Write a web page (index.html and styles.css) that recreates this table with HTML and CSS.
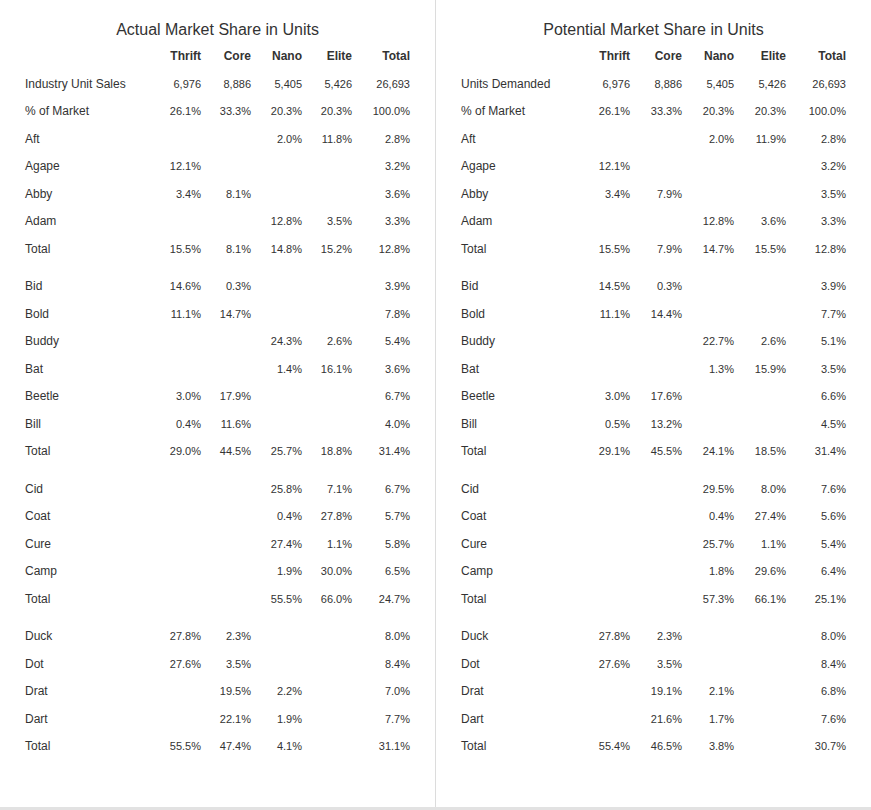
FILE: index.html
```html
<!DOCTYPE html>
<html lang="en">
<head>
<meta charset="utf-8">
<title>Market Share in Units</title>
<link rel="stylesheet" href="styles.css">
</head>
<body>
<div class="page">
  <section class="panel panel-actual">
    <h2 class="title">Actual Market Share in Units</h2>
    <table class="share">
      <colgroup><col class="c-label"><col class="c-num"><col class="c-num"><col class="c-num2"><col class="c-num"><col class="c-total"></colgroup>
      <thead>
        <tr><th class="label"></th><th>Thrift</th><th>Core</th><th>Nano</th><th>Elite</th><th>Total</th></tr>
      </thead>
      <tbody>
        <tr><td class="label">Industry Unit Sales</td><td>6,976</td><td>8,886</td><td>5,405</td><td>5,426</td><td>26,693</td></tr>
        <tr><td class="label">% of Market</td><td>26.1%</td><td>33.3%</td><td>20.3%</td><td>20.3%</td><td>100.0%</td></tr>
        <tr><td class="label">Aft</td><td></td><td></td><td>2.0%</td><td>11.8%</td><td>2.8%</td></tr>
        <tr><td class="label">Agape</td><td>12.1%</td><td></td><td></td><td></td><td>3.2%</td></tr>
        <tr><td class="label">Abby</td><td>3.4%</td><td>8.1%</td><td></td><td></td><td>3.6%</td></tr>
        <tr><td class="label">Adam</td><td></td><td></td><td>12.8%</td><td>3.5%</td><td>3.3%</td></tr>
        <tr><td class="label">Total</td><td>15.5%</td><td>8.1%</td><td>14.8%</td><td>15.2%</td><td>12.8%</td></tr>
        <tr class="sep"><td colspan="6"></td></tr>
        <tr><td class="label">Bid</td><td>14.6%</td><td>0.3%</td><td></td><td></td><td>3.9%</td></tr>
        <tr><td class="label">Bold</td><td>11.1%</td><td>14.7%</td><td></td><td></td><td>7.8%</td></tr>
        <tr><td class="label">Buddy</td><td></td><td></td><td>24.3%</td><td>2.6%</td><td>5.4%</td></tr>
        <tr><td class="label">Bat</td><td></td><td></td><td>1.4%</td><td>16.1%</td><td>3.6%</td></tr>
        <tr><td class="label">Beetle</td><td>3.0%</td><td>17.9%</td><td></td><td></td><td>6.7%</td></tr>
        <tr><td class="label">Bill</td><td>0.4%</td><td>11.6%</td><td></td><td></td><td>4.0%</td></tr>
        <tr><td class="label">Total</td><td>29.0%</td><td>44.5%</td><td>25.7%</td><td>18.8%</td><td>31.4%</td></tr>
        <tr class="sep"><td colspan="6"></td></tr>
        <tr><td class="label">Cid</td><td></td><td></td><td>25.8%</td><td>7.1%</td><td>6.7%</td></tr>
        <tr><td class="label">Coat</td><td></td><td></td><td>0.4%</td><td>27.8%</td><td>5.7%</td></tr>
        <tr><td class="label">Cure</td><td></td><td></td><td>27.4%</td><td>1.1%</td><td>5.8%</td></tr>
        <tr><td class="label">Camp</td><td></td><td></td><td>1.9%</td><td>30.0%</td><td>6.5%</td></tr>
        <tr><td class="label">Total</td><td></td><td></td><td>55.5%</td><td>66.0%</td><td>24.7%</td></tr>
        <tr class="sep"><td colspan="6"></td></tr>
        <tr><td class="label">Duck</td><td>27.8%</td><td>2.3%</td><td></td><td></td><td>8.0%</td></tr>
        <tr><td class="label">Dot</td><td>27.6%</td><td>3.5%</td><td></td><td></td><td>8.4%</td></tr>
        <tr><td class="label">Drat</td><td></td><td>19.5%</td><td>2.2%</td><td></td><td>7.0%</td></tr>
        <tr><td class="label">Dart</td><td></td><td>22.1%</td><td>1.9%</td><td></td><td>7.7%</td></tr>
        <tr><td class="label">Total</td><td>55.5%</td><td>47.4%</td><td>4.1%</td><td></td><td>31.1%</td></tr>
      </tbody>
    </table>
  </section>
  <section class="panel panel-potential">
    <h2 class="title">Potential Market Share in Units</h2>
    <table class="share">
      <colgroup><col class="c-label"><col class="c-num"><col class="c-num"><col class="c-num2"><col class="c-num"><col class="c-total"></colgroup>
      <thead>
        <tr><th class="label"></th><th>Thrift</th><th>Core</th><th>Nano</th><th>Elite</th><th>Total</th></tr>
      </thead>
      <tbody>
        <tr><td class="label">Units Demanded</td><td>6,976</td><td>8,886</td><td>5,405</td><td>5,426</td><td>26,693</td></tr>
        <tr><td class="label">% of Market</td><td>26.1%</td><td>33.3%</td><td>20.3%</td><td>20.3%</td><td>100.0%</td></tr>
        <tr><td class="label">Aft</td><td></td><td></td><td>2.0%</td><td>11.9%</td><td>2.8%</td></tr>
        <tr><td class="label">Agape</td><td>12.1%</td><td></td><td></td><td></td><td>3.2%</td></tr>
        <tr><td class="label">Abby</td><td>3.4%</td><td>7.9%</td><td></td><td></td><td>3.5%</td></tr>
        <tr><td class="label">Adam</td><td></td><td></td><td>12.8%</td><td>3.6%</td><td>3.3%</td></tr>
        <tr><td class="label">Total</td><td>15.5%</td><td>7.9%</td><td>14.7%</td><td>15.5%</td><td>12.8%</td></tr>
        <tr class="sep"><td colspan="6"></td></tr>
        <tr><td class="label">Bid</td><td>14.5%</td><td>0.3%</td><td></td><td></td><td>3.9%</td></tr>
        <tr><td class="label">Bold</td><td>11.1%</td><td>14.4%</td><td></td><td></td><td>7.7%</td></tr>
        <tr><td class="label">Buddy</td><td></td><td></td><td>22.7%</td><td>2.6%</td><td>5.1%</td></tr>
        <tr><td class="label">Bat</td><td></td><td></td><td>1.3%</td><td>15.9%</td><td>3.5%</td></tr>
        <tr><td class="label">Beetle</td><td>3.0%</td><td>17.6%</td><td></td><td></td><td>6.6%</td></tr>
        <tr><td class="label">Bill</td><td>0.5%</td><td>13.2%</td><td></td><td></td><td>4.5%</td></tr>
        <tr><td class="label">Total</td><td>29.1%</td><td>45.5%</td><td>24.1%</td><td>18.5%</td><td>31.4%</td></tr>
        <tr class="sep"><td colspan="6"></td></tr>
        <tr><td class="label">Cid</td><td></td><td></td><td>29.5%</td><td>8.0%</td><td>7.6%</td></tr>
        <tr><td class="label">Coat</td><td></td><td></td><td>0.4%</td><td>27.4%</td><td>5.6%</td></tr>
        <tr><td class="label">Cure</td><td></td><td></td><td>25.7%</td><td>1.1%</td><td>5.4%</td></tr>
        <tr><td class="label">Camp</td><td></td><td></td><td>1.8%</td><td>29.6%</td><td>6.4%</td></tr>
        <tr><td class="label">Total</td><td></td><td></td><td>57.3%</td><td>66.1%</td><td>25.1%</td></tr>
        <tr class="sep"><td colspan="6"></td></tr>
        <tr><td class="label">Duck</td><td>27.8%</td><td>2.3%</td><td></td><td></td><td>8.0%</td></tr>
        <tr><td class="label">Dot</td><td>27.6%</td><td>3.5%</td><td></td><td></td><td>8.4%</td></tr>
        <tr><td class="label">Drat</td><td></td><td>19.1%</td><td>2.1%</td><td></td><td>6.8%</td></tr>
        <tr><td class="label">Dart</td><td></td><td>21.6%</td><td>1.7%</td><td></td><td>7.6%</td></tr>
        <tr><td class="label">Total</td><td>55.4%</td><td>46.5%</td><td>3.8%</td><td></td><td>30.7%</td></tr>
      </tbody>
    </table>
  </section>
</div>
</body>
</html>
```

FILE: styles.css
```css
html, body {
  margin: 0;
  padding: 0;
}

body {
  background: #e2e2e2;
  font-family: "Liberation Sans", Arial, sans-serif;
  color: #333;
}

.page {
  display: flex;
  width: 871px;
  background: #fff;
}

.panel {
  width: 435px;
  box-sizing: border-box;
  padding: 18px 25px 47px;
}

.panel-actual {
  border-right: 1px solid #dcdcdc;
  width: 436px;
}

.title {
  margin: 0;
  font-size: 16px;
  font-weight: normal;
  line-height: 24px;
  text-align: center;
  color: #333;
}

.share {
  width: 385px;
  table-layout: fixed;
  border-collapse: collapse;
  font-size: 11px;
}

.share th,
.share td {
  padding: 0;
  text-align: right;
  white-space: nowrap;
  vertical-align: middle;
}

.share th {
  height: 28px;
  font-size: 12px;
  font-weight: bold;
  color: #333;
}

.share td {
  height: 27.5px;
}

.share .label {
  text-align: left;
  font-size: 12px;
}

.share .sep td {
  height: 10px;
}

.panel-actual .c-label { width: 126px; }
.panel-actual .c-num { width: 50px; }
.panel-actual .c-num2 { width: 51px; }
.panel-actual .c-total { width: 58px; }

.panel-potential .c-label { width: 117px; }
.panel-potential .c-num { width: 52px; }
.panel-potential .c-num2 { width: 52px; }
.panel-potential .c-total { width: 60px; }
```
